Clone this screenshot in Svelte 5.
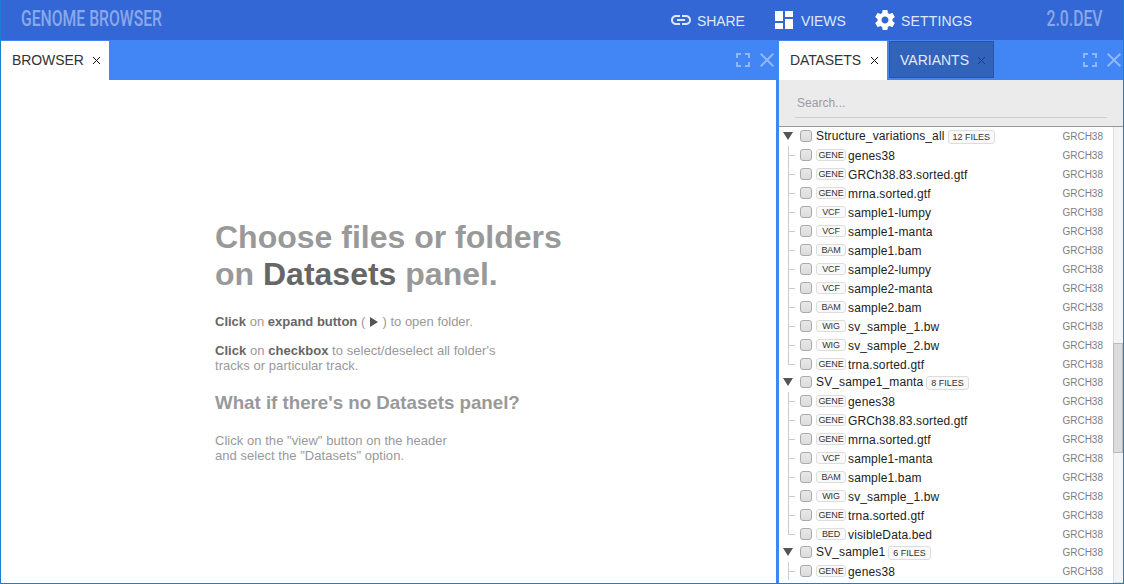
<script>
  const gene = ['GENE', 'genes38'];
  const gtf = ['GENE', 'GRCh38.83.sorted.gtf'];
  const mrna = ['GENE', 'mrna.sorted.gtf'];
  const trna = ['GENE', 'trna.sorted.gtf'];
  const folders = [
    {
      name: 'Structure_variations_all', count: 12,
      files: [gene, gtf, mrna, ['VCF', 'sample1-lumpy'], ['VCF', 'sample1-manta'], ['BAM', 'sample1.bam'],
        ['VCF', 'sample2-lumpy'], ['VCF', 'sample2-manta'], ['BAM', 'sample2.bam'],
        ['WIG', 'sv_sample_1.bw'], ['WIG', 'sv_sample_2.bw'], trna]
    },
    {
      name: 'SV_sampe1_manta', count: 8,
      files: [gene, gtf, mrna, ['VCF', 'sample1-manta'], ['BAM', 'sample1.bam'], ['WIG', 'sv_sample_1.bw'], trna,
        ['BED', 'visibleData.bed']]
    },
    { name: 'SV_sample1', count: 6, files: [gene], more: true }
  ];
</script>

{#snippet cross()}
  <svg class="cross" width="7" height="7" viewBox="0 0 7 7"><path d="M0 0L7 7M7 0L0 7" stroke="currentColor" /></svg>
{/snippet}

{#snippet paneTools()}
  <div class="tools">
    <svg width="14" height="14" viewBox="0 0 14 14"><path d="M1 5V1H5M9 1H13V5M13 9V13H9M5 13H1V9" fill="none" stroke="currentColor" stroke-width="2" /></svg>
    <svg width="14" height="14" viewBox="0 0 14 14"><path d="M.7 .7L13.3 13.3M13.3 .7L.7 13.3" stroke="currentColor" stroke-width="2" /></svg>
  </div>
{/snippet}

<div class="app">
  <header>
    <svg class="brand" width="142" height="24"><text x="0" y="18.500" textLength="141" lengthAdjust="spacingAndGlyphs">GENOME BROWSER</text></svg>
    <nav>
      <button class="share">
        <svg width="20" height="10" viewBox="2 7 20 10"><path fill="currentColor" d="M3.9 12c0-1.71 1.39-3.1 3.1-3.1h4V7H7c-2.76 0-5 2.24-5 5s2.24 5 5 5h4v-1.900H7c-1.710 0-3.100-1.390-3.100-3.100zM8 13h8v-2H8v2zm9-6h-4v1.900h4c1.710 0 3.100 1.390 3.100 3.100s-1.390 3.100-3.100 3.100h-4V17h4c2.760 0 5-2.240 5-5s-2.240-5-5-5z" /></svg>
        <span>SHARE</span>
      </button>
      <button class="views">
        <svg width="18" height="18" viewBox="3 3 18 18"><path fill="#fff" d="M3 13h8V3H3v10zm0 8h8v-6H3v6zm10 0h8V11h-8v10zm0-18v6h8V3h-8z" /></svg>
        <span>VIEWS</span>
      </button>
      <button class="settings">
        <svg width="20" height="20" viewBox="2 2 20 20"><path fill="#fff" d="M19.430 12.980c.040-.320.070-.640.070-.980s-.030-.660-.070-.980l2.110-1.650c.190-.150.240-.420.120-.640l-2-3.460c-.120-.220-.390-.300-.610-.220l-2.490 1c-.520-.400-1.080-.730-1.690-.980l-.380-2.650C14.460 2.180 14.250 2 14 2h-4c-.250 0-.460.180-.490.420l-.380 2.650c-.610.250-1.170.590-1.690.980l-2.490-1c-.230-.090-.490 0-.610.220l-2 3.460c-.130.220-.070.490.120.640l2.110 1.650c-.040.320-.070.650-.070.980s.030.660.070.980l-2.110 1.650c-.190.150-.240.420-.120.640l2 3.460c.120.220.390.300.610.220l2.490-1c.520.400 1.080.730 1.690.980l.380 2.650c.030.240.240.420.490.420h4c.250 0 .460-.180.490-.420l.380-2.650c.610-.250 1.170-.590 1.690-.980l2.490 1c.230.090.490 0 .610-.220l2-3.460c.120-.220.070-.490-.120-.640l-2.110-1.650zM12 15.500c-1.930 0-3.500-1.570-3.500-3.500s1.570-3.500 3.500-3.500 3.500 1.570 3.500 3.500-1.570 3.500-3.500 3.500z" /></svg>
        <span>SETTINGS</span>
      </button>
    </nav>
    <svg class="version" width="57" height="24"><text x="0.500" y="18.500" textLength="56" lengthAdjust="spacingAndGlyphs">2.0.DEV</text></svg>
  </header>

  <main>
    <section class="left">
      <div class="bar">
        <div class="tab active"><span>BROWSER</span>{@render cross()}</div>
        {@render paneTools()}
      </div>
      <div class="intro">
        <h1>Choose files or folders<br />on <b>Datasets</b> panel.</h1>
        <p><b>Click</b> on <b>expand button</b> ( <svg class="play" width="8" height="10" viewBox="0 0 8 10"><path d="M0 0L8 5L0 10Z" fill="#555" /></svg> ) to open folder.</p>
        <p class="wide"><b>Click</b> on <b>checkbox</b> to select/deselect all folder's<br />tracks or particular track.</p>
        <h3>What if there's no Datasets panel?</h3>
        <p class="wide">Click on the "view" button on the header<br />and select the "Datasets" option.</p>
      </div>
    </section>

    <section class="right">
      <div class="bar">
        <div class="tab active"><span>DATASETS</span>{@render cross()}</div>
        <div class="tab idle"><span>VARIANTS</span>{@render cross()}</div>
        {@render paneTools()}
      </div>
      <div class="search"><div>Search...</div></div>
      <div class="list">
        <div class="tree">
          {#each folders as folder}
            <div class="row folder">
              <svg class="arrow" width="10" height="8" viewBox="0 0 10 8"><path d="M0 0H10L5 8Z" fill="#555" /></svg>
              <i class="check"></i>
              <span class="name">{folder.name}</span>
              <span class="count">{folder.count} FILES</span>
              <span class="ref">GRCH38</span>
            </div>
            {#each folder.files as file, i}
              <div class="row file">
                <i class="branch" class:first={i === 0} class:last={i === folder.files.length - 1 && !folder.more}></i>
                <i class="check"></i>
                <span class="type">{file[0]}</span>
                <span class="name">{file[1]}</span>
                <span class="ref">GRCH38</span>
              </div>
            {/each}
          {/each}
        </div>
        <div class="scroll"><div class="thumb"></div></div>
      </div>
    </section>
  </main>
</div>

<style>
  :global(body) { margin: 0; overflow: hidden; }
  * { box-sizing: border-box; }
  .app {
    width: 1124px; height: 584px; display: flex; flex-direction: column; background: #fff;
    border: 1px solid #1a7fd0; border-top: 0; overflow: hidden;
    font-family: "Liberation Sans", Arial, sans-serif; color: #222;
  }
  svg { display: block; flex: none; }
  header { height: 40px; flex: none; background: #3367d6; display: flex; align-items: flex-start; padding: 7px 20px 0 20px; }
  header text { font: 500 21.5px "Roboto", sans-serif; fill: #8aa8e9; }
  .brand, .version { overflow: visible; }
  nav { display: flex; margin-left: auto; height: 26px; align-items: center; }
  button { border: 0; padding: 0; background: none; display: flex; align-items: center; color: #dfe7f9; font: 14px "Liberation Sans", sans-serif; height: 26px; }
  button span { position: relative; top: 1px; white-space: nowrap; letter-spacing: -.1px; }
  .share { width: 104px; gap: 6px; }
  .views { width: 100px; gap: 8px; }
  .settings { width: 171px; gap: 6px; }
  .settings span { letter-spacing: .15px; }
  main { flex: 1; min-height: 0; display: flex; }
  .left { width: 775px; flex: none; display: flex; flex-direction: column; }
  .right { flex: 1; min-width: 0; display: flex; flex-direction: column; border-left: 3px solid #4285f4; }
  .bar { height: 40px; flex: none; background: #4285f4; display: flex; align-items: flex-start; padding-top: 1px; }
  .tab { display: flex; align-items: center; font-size: 14px; letter-spacing: -0.1px; height: 39px; padding-left: 11px; }
  .tab span { flex: none; padding-bottom: 2px; }
  .tab .cross { margin: 0 0 0 auto; }
  .active { width: 108px; background: #fff; color: #333; padding-right: 9px; }
  .idle { width: 105px; height: 37px; margin-left: 2px; background: #3263bb; border: 1px solid #2a54a6; color: #e2e9f6; padding: 0 8px 0 10px; letter-spacing: 0; }
  .idle span { padding-bottom: 0; }
  .idle .cross { color: #173b80; margin-top: 2px; }
  .cross { color: #111; }
  .tools { margin-left: auto; display: flex; gap: 10px; padding: 12px 2px 0 0; color: #90b7f8; }
  .intro { padding: 139px 0 0 214px; color: #999; }
  .intro b { color: #666; }
  h1 { margin: 0; font-size: 32px; line-height: 37px; }
  h3 { margin: 19px 0 19px; font-size: 18.72px; line-height: 22px; }
  p { margin: 0 0 14px; font-size: 13px; line-height: 15px; letter-spacing: 0; }
  .wide { letter-spacing: .04px; }
  h1 + p { margin-top: 21px; }
  .play { display: inline-block; margin: 0 1px; vertical-align: -1px; }
  .search { height: 47px; flex: none; background: #ebebeb; border-bottom: 1px solid #999; padding: 8px 16px 0; }
  .search div { height: 30px; border-bottom: 1px solid #ccc; padding-left: 2px; font-size: 12px; line-height: 31px; color: #9a9aa8; letter-spacing: .05px; }
  .list { flex: 1; min-height: 0; display: flex; overflow: hidden; }
  .tree { flex: 1; min-width: 0; padding-bottom: 1px; overflow: hidden; }
  .row { display: flex; align-items: center; padding: 0 10px 0 4px; white-space: nowrap; }
  .folder { height: 18px; }
  .file { height: 19px; padding-top: 1px; }
  .arrow { margin-right: 7px; }
  .check { width: 12px; height: 12px; flex: none; border: 1px solid #aaa; border-radius: 3px; background: linear-gradient(#e8e8e8, #dcdcdc); margin-right: 4px; }
  .name { font-size: 12px; line-height: 18px; letter-spacing: .14px; }
  .file .name { position: relative; top: .5px; }
  .folder .name { letter-spacing: .13px; }
  .type, .count { border: 1px solid #ddd; border-radius: 3px; background: #f9f9f9; font-size: 9px; text-align: center; color: #333; }
  .type { width: 30px; height: 12px; line-height: 10px; margin: -1px 2px 0 0; letter-spacing: -.1px; }
  .count { height: 14px; line-height: 12px; padding: 0 4px; margin: 2px 0 0 3px; }
  .ref { margin-left: auto; font-size: 10px; color: #808080; }
  .branch { align-self: stretch; width: 7px; margin: -1px 5px 0 5px; border-left: 1px solid #ccc; background: linear-gradient(#ccc, #ccc) 0 10px / 7px 1px no-repeat; }
  .branch.first { margin-top: 0; background-position: 0 9px; }
  .branch.last { height: 11px; align-self: flex-start; }
  .scroll { width: 10px; flex: none; background: #f4f4f4; border-left: 1px solid #ddd; border-bottom: 1px solid #ddd; padding-top: 216px; }
  .thumb { height: 110px; margin-left: -1px; background: #dcdcdc; border: 1px solid #bbb; }
</style>
